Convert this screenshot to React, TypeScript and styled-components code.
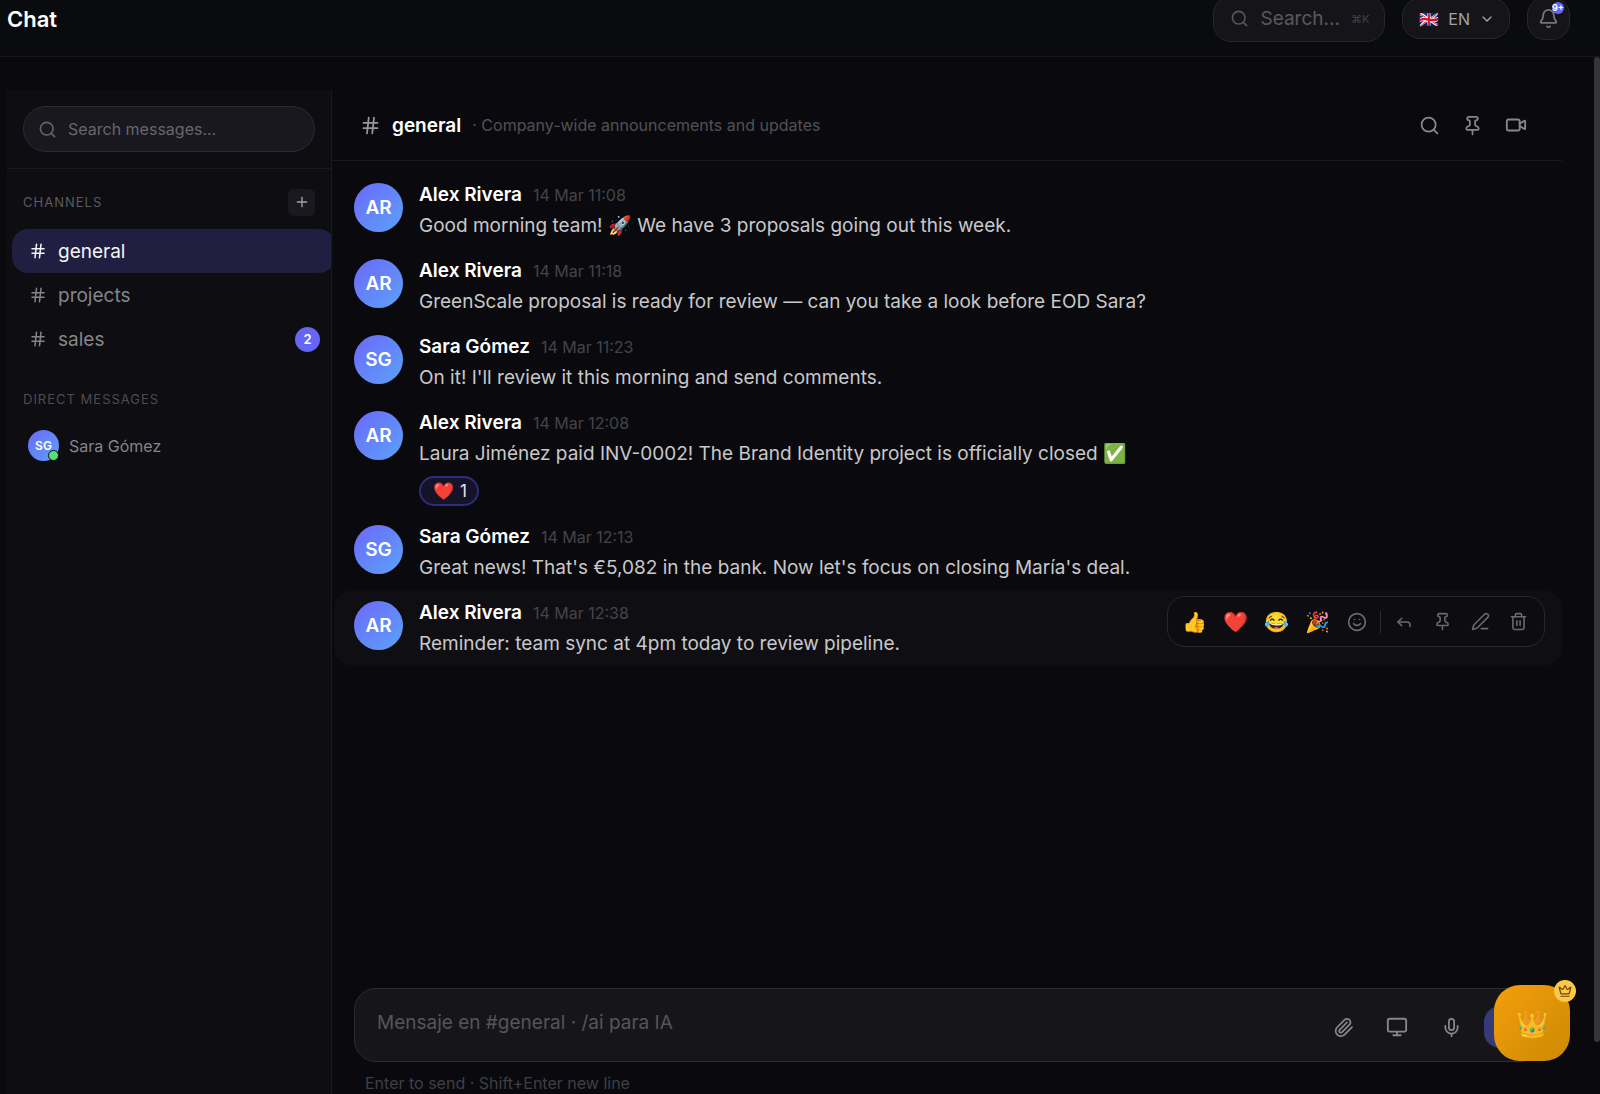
import React from 'react';
import styled, { createGlobalStyle, css } from 'styled-components';
import {
  Bell,
  ChevronDown,
  Crown,
  Hash,
  Mic,
  Monitor,
  Paperclip,
  PenLine,
  Pin,
  Plus,
  Reply,
  Search,
  Smile,
  Trash2,
  Video,
} from 'lucide-react';

const GlobalStyle = createGlobalStyle`
  *, *::before, *::after { box-sizing: border-box; }
  body {
    margin: 0;
    background: #0a0a0e;
    color: #fff;
    font-family: Inter, "Noto Sans", sans-serif;
    overflow: hidden;
  }
  button, input, textarea { font: inherit; color: inherit; }
  button { cursor: pointer; border: 0; background: none; padding: 0; }
  h1, h2, h3, p, ul { margin: 0; padding: 0; }
  ul { list-style: none; }
`;

const Page = styled.div`
  display: flex;
  flex-direction: column;
  height: 100vh;
  overflow: hidden;
`;

/* The top bar is scrolled slightly out of view. */
const TopBar = styled.header`
  display: flex;
  flex: none;
  align-items: center;
  gap: 17px;
  height: 76px;
  margin-top: -19px;
  padding: 0 30px 0 7px;
  background: #0a0b0e;
  border-bottom: 1px solid #17171b;
`;

const PageTitle = styled.h1`
  flex: 1;
  font-size: 22px;
  line-height: 28px;
  font-weight: 600;
`;

const topControl = css`
  display: flex;
  align-items: center;
  background: #151519;
  border: 1px solid #27272b;
  border-radius: 18px;
`;

const SearchButton = styled.button`
  ${topControl}
  gap: 11px;
  height: 46px;
  padding: 0 15px 0 16px;
  font-size: 19px;
  color: #59595d;
`;

const Shortcut = styled.kbd`
  font-family: Inter, "DejaVu Sans", sans-serif;
  font-size: 11px;
  color: #434347;
`;

const LanguageButton = styled.button`
  ${topControl}
  gap: 9px;
  height: 41px;
  padding: 0 14px 0 16px;
  font-size: 16px;
  color: #a3a3a6;
`;

const BellButton = styled.button`
  ${topControl}
  position: relative;
  justify-content: center;
  width: 43px;
  height: 43px;
  color: #77777b;
`;

const BellCount = styled.span`
  position: absolute;
  top: 4px;
  right: 5px;
  width: 12px;
  height: 12px;
  border-radius: 50%;
  background: #6366f1;
  color: #fff;
  font-size: 9px;
  line-height: 12px;
  font-weight: 700;
  display: flex;
  justify-content: center;
`;

const Body = styled.div`
  display: flex;
  flex: 1;
  min-height: 0;
`;

const Workspace = styled.div`
  display: flex;
  flex: 1;
  min-width: 0;
  margin: 33px 32px 0 7px;
`;

const ScrollThumb = styled.div`
  flex: none;
  width: 6px;
  margin-bottom: 52px;
  border-radius: 3px;
  background: #353539;
`;

const Sidebar = styled.aside`
  flex: none;
  width: 325px;
  overflow: hidden;
  background: #0d0d12;
  border-right: 1px solid #19191e;
`;

const SidebarSearch = styled.div`
  padding: 16px;
  border-bottom: 1px solid #19191e;
`;

const SearchField = styled.label`
  display: flex;
  align-items: center;
  gap: 11px;
  height: 46px;
  padding: 0 14px;
  border: 1px solid #2b2b31;
  border-radius: 23px;
  background: #19181f;
  color: #67676b;
  input {
    flex: 1;
    min-width: 0;
    padding: 0;
    border: 0;
    outline: 0;
    background: none;
    font-size: 16px;
  }
  input::placeholder { color: #67676b; opacity: 1; }
`;

const SectionHead = styled.div<{ $top: number; $dim?: boolean }>`
  display: flex;
  align-items: center;
  justify-content: space-between;
  height: 28px;
  margin: ${(p) => p.$top}px 16px 13px;
  color: ${(p) => (p.$dim ? '#4c4c51' : '#5b5b60')};
  h2 {
    font-size: 13px;
    font-weight: 400;
    letter-spacing: 1px;
    text-transform: uppercase;
  }
`;

const AddButton = styled.button`
  display: grid;
  place-items: center;
  width: 27px;
  height: 27px;
  border-radius: 6px;
  background: #19191f;
  color: #a3a3a8;
`;

const ChannelButton = styled.button<{ $active?: boolean }>`
  display: flex;
  align-items: center;
  gap: 11px;
  width: 100%;
  height: 44px;
  padding: 0 15px 0 17px;
  border-radius: 16px;
  background: ${(p) => (p.$active ? '#201f42' : 'transparent')};
  color: ${(p) => (p.$active ? '#f4f4f6' : '#858589')};
  font-size: 19px;
  text-align: left;
  span { flex: 1; }
`;

const ChannelList = styled.ul`
  margin-left: 5px;
  margin-right: -4px;
`;

const Unread = styled.b`
  display: grid;
  place-items: center;
  width: 25px;
  height: 25px;
  border-radius: 50%;
  background: #6665f5;
  color: #fff;
  font-size: 13px;
  font-weight: 600;
`;

const DirectButton = styled.button`
  display: flex;
  align-items: center;
  gap: 10px;
  margin: 17px 0 0 21px;
  font-size: 16px;
  color: #858589;
`;

const Avatar = styled.span<{ $size: number }>`
  position: relative;
  display: grid;
  place-items: center;
  flex: none;
  width: ${(p) => p.$size}px;
  height: ${(p) => p.$size}px;
  border-radius: 50%;
  background: linear-gradient(135deg, #6c68fa, #5ba2f8);
  color: #fff;
  font-size: ${(p) => (p.$size > 40 ? 19 : 12)}px;
  font-weight: 600;
`;

const Online = styled.i`
  position: absolute;
  right: 0;
  bottom: 0;
  width: 11px;
  height: 11px;
  border: 1px solid #0d0d12;
  border-radius: 50%;
  background: #5bdc74;
`;

const Conversation = styled.main`
  display: flex;
  flex: 1;
  flex-direction: column;
  min-width: 0;
`;

const ConversationHead = styled.div`
  display: flex;
  flex: none;
  align-items: center;
  gap: 11px;
  height: 71px;
  padding: 0 25px 0 28px;
  border-bottom: 1px solid #19191e;
  color: #98989c;
  h2 { font-size: 19px; font-weight: 600; color: #fff; }
  p { flex: 1; font-size: 16px; color: #515155; }
`;

const HeadActions = styled.div`
  display: flex;
  color: #88888c;
`;

const IconButton = styled.button<{ $w: number; $h: number }>`
  display: grid;
  place-items: center;
  width: ${(p) => p.$w}px;
  height: ${(p) => p.$h}px;
  font-size: 20px;
  line-height: 24px;
`;

const MessageList = styled.ul`
  flex: 1;
  min-height: 0;
  padding: 11px 0 0 2px;
`;

const MessageRow = styled.li<{ $hovered?: boolean }>`
  position: relative;
  display: flex;
  align-items: flex-start;
  gap: 16px;
  padding: 11px 20px 8px;
  border-radius: 20px;
  background: ${(p) => (p.$hovered ? '#0f0f13' : 'transparent')};
`;

const MessageHead = styled.div`
  display: flex;
  align-items: baseline;
  gap: 11px;
  height: 23px;
  h3 { font-size: 19px; line-height: 23px; font-weight: 600; }
  time { font-size: 16px; line-height: 20px; color: #444448; }
`;

const MessageText = styled.p`
  margin-top: 7px;
  height: 27px;
  font-size: 19px;
  line-height: 26px;
  color: #c8c8ca;
`;

const Reaction = styled.button`
  display: flex;
  align-items: center;
  gap: 6px;
  height: 30px;
  margin-top: 8px;
  padding: 0 10px 0 12px;
  border: 2px solid #2f2d7a;
  border-radius: 15px;
  background: #141328;
  color: #e6e6ea;
  font-size: 17px;
  line-height: 20px;
`;

const MessageTools = styled.div`
  position: absolute;
  top: 6px;
  right: 17px;
  display: flex;
  align-items: center;
  height: 51px;
  padding: 0 7px 0 6px;
  border: 1px solid #28282c;
  border-radius: 18px;
  background: #0c0c11;
  color: #6a6a6f;
`;

const ToolDivider = styled.span`
  width: 1px;
  height: 22px;
  margin: 0 4px;
  background: #2b2b30;
`;

const ComposerArea = styled.footer`
  flex: none;
  padding: 0 21px 0 22px;
`;

const Composer = styled.div`
  display: flex;
  align-items: center;
  gap: 12px;
  height: 74px;
  padding: 4px 14px 0 22px;
  border: 1px solid #2d2d31;
  border-radius: 22px;
  background: #161619;
  color: #88888c;
  textarea {
    flex: 1;
    height: 38px;
    padding: 0;
    border: 0;
    outline: 0;
    resize: none;
    background: none;
    font-size: 19px;
    line-height: 30px;
  }
  textarea::placeholder { color: #555559; opacity: 1; }
`;

const SendButton = styled.button`
  width: 42px;
  height: 42px;
  border-radius: 16px;
  background: #353c75;
`;

const Hint = styled.p`
  padding: 10px 11px 0;
  height: 32px;
  font-size: 16px;
  line-height: 22px;
  color: #3f3f44;
`;

const FloatingButton = styled.button`
  position: fixed;
  right: 30px;
  bottom: 33px;
  display: grid;
  place-items: center;
  width: 76px;
  height: 76px;
  border-radius: 26px;
  background: linear-gradient(135deg, #f59e0b, #ca8a04);
  font-size: 26px;
`;

const CrownEmoji = styled.span`
  opacity: 0.75;
`;

const CrownBadge = styled.span`
  position: absolute;
  top: -5px;
  right: -6px;
  display: grid;
  place-items: center;
  width: 22px;
  height: 22px;
  border-radius: 50%;
  background: #fcc945;
  color: #713f12;
`;

type Message = {
  initials: string;
  name: string;
  time: string;
  text: string;
  likes?: number;
  hovered?: boolean;
};

const messages: Message[] = [
  { initials: 'AR', name: 'Alex Rivera', time: '14 Mar 11:08', text: 'Good morning team! 🚀 We have 3 proposals going out this week.' },
  { initials: 'AR', name: 'Alex Rivera', time: '14 Mar 11:18', text: 'GreenScale proposal is ready for review — can you take a look before EOD Sara?' },
  { initials: 'SG', name: 'Sara Gómez', time: '14 Mar 11:23', text: "On it! I'll review it this morning and send comments." },
  { initials: 'AR', name: 'Alex Rivera', time: '14 Mar 12:08', text: 'Laura Jiménez paid INV-0002! The Brand Identity project is officially closed ✅', likes: 1 },
  { initials: 'SG', name: 'Sara Gómez', time: '14 Mar 12:13', text: "Great news! That's €5,082 in the bank. Now let's focus on closing María's deal." },
  { initials: 'AR', name: 'Alex Rivera', time: '14 Mar 12:38', text: 'Reminder: team sync at 4pm today to review pipeline.', hovered: true },
];

const channels = [
  { name: 'general', active: true, unread: 0 },
  { name: 'projects', active: false, unread: 0 },
  { name: 'sales', active: false, unread: 2 },
];

const quickReactions = ['👍', '❤️', '😂', '🎉'];

function Tools() {
  return (
    <MessageTools>
      {quickReactions.map((emoji) => (
        <IconButton key={emoji} $w={41} $h={38}>{emoji}</IconButton>
      ))}
      <IconButton $w={38} $h={38} aria-label="More reactions"><Smile size={20} /></IconButton>
      <ToolDivider />
      <IconButton $w={38} $h={38} aria-label="Reply"><Reply size={18} /></IconButton>
      <IconButton $w={38} $h={38} aria-label="Pin message"><Pin size={19} /></IconButton>
      <IconButton $w={38} $h={38} aria-label="Edit message"><PenLine size={19} /></IconButton>
      <IconButton $w={38} $h={38} aria-label="Delete message"><Trash2 size={19} /></IconButton>
    </MessageTools>
  );
}

export default function App() {
  return (
    <Page>
      <GlobalStyle />
      <TopBar>
        <PageTitle>Chat</PageTitle>
        <SearchButton>
          <Search size={19} />
          Search...
          <Shortcut>⌘K</Shortcut>
        </SearchButton>
        <LanguageButton>
          <span>🇬🇧</span>
          EN
          <ChevronDown size={16} />
        </LanguageButton>
        <BellButton aria-label="Notifications">
          <Bell size={21} />
          <BellCount>9+</BellCount>
        </BellButton>
      </TopBar>
      <Body>
        <Workspace>
          <Sidebar>
            <SidebarSearch>
              <SearchField>
                <Search size={19} />
                <input type="text" aria-label="Search messages" placeholder="Search messages..." />
              </SearchField>
            </SidebarSearch>
            <SectionHead $top={19}>
              <h2>Channels</h2>
              <AddButton aria-label="Add channel"><Plus size={16} /></AddButton>
            </SectionHead>
            <ChannelList>
              {channels.map((c) => (
                <li key={c.name}>
                  <ChannelButton $active={c.active}>
                    <Hash size={18} />
                    <span>{c.name}</span>
                    {c.unread > 0 && <Unread>{c.unread}</Unread>}
                  </ChannelButton>
                </li>
              ))}
            </ChannelList>
            <SectionHead $top={24} $dim>
              <h2>Direct messages</h2>
            </SectionHead>
            <DirectButton>
              <Avatar $size={31}>SG<Online /></Avatar>
              Sara Gómez
            </DirectButton>
          </Sidebar>
          <Conversation>
            <ConversationHead>
              <Hash size={21} />
              <h2>general</h2>
              <p>· Company-wide announcements and updates</p>
              <HeadActions>
                <IconButton $w={43} $h={43} aria-label="Search channel"><Search size={21} /></IconButton>
                <IconButton $w={43} $h={43} aria-label="Pinned messages"><Pin size={21} /></IconButton>
                <IconButton $w={43} $h={43} aria-label="Start video call"><Video size={22} /></IconButton>
              </HeadActions>
            </ConversationHead>
            <MessageList>
              {messages.map((m) => (
                <MessageRow key={m.time} $hovered={m.hovered}>
                  <Avatar $size={49}>{m.initials}</Avatar>
                  <div>
                    <MessageHead>
                      <h3>{m.name}</h3>
                      <time>{m.time}</time>
                    </MessageHead>
                    <MessageText>{m.text}</MessageText>
                    {m.likes && <Reaction><span>❤️</span>{m.likes}</Reaction>}
                  </div>
                  {m.hovered && <Tools />}
                </MessageRow>
              ))}
            </MessageList>
            <ComposerArea>
              <Composer>
                <textarea aria-label="Message" placeholder="Mensaje en #general · /ai para IA" />
                <IconButton $w={42} $h={42} aria-label="Attach file"><Paperclip size={21} /></IconButton>
                <IconButton $w={42} $h={42} aria-label="Share screen"><Monitor size={22} /></IconButton>
                <IconButton $w={42} $h={42} aria-label="Record voice"><Mic size={21} /></IconButton>
                <SendButton aria-label="Send" />
              </Composer>
              <Hint>Enter to send · Shift+Enter new line</Hint>
            </ComposerArea>
          </Conversation>
        </Workspace>
        <ScrollThumb />
      </Body>
      <FloatingButton aria-label="Premium">
        <CrownEmoji>👑</CrownEmoji>
        <CrownBadge><Crown size={14} /></CrownBadge>
      </FloatingButton>
    </Page>
  );
}
